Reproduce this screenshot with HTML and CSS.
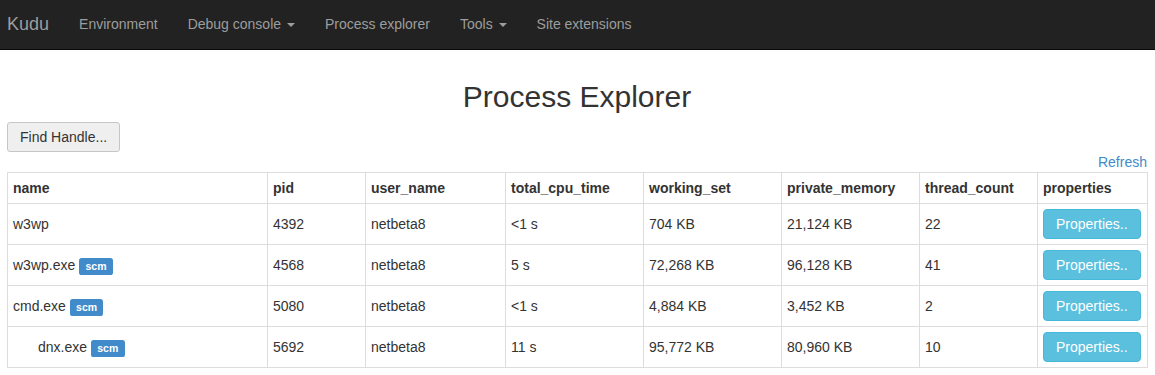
FILE: index.html
```html
<!DOCTYPE html>
<html lang="en">
  <head>
    <meta charset="UTF-8" />
    <title>Process Explorer - Kudu</title>
    <link rel="stylesheet" href="styles.css">
  </head>
  <body>
    <nav class="navbar">
      <a class="brand" href="#">Kudu</a>
      <ul class="nav">
        <li><a href="#">Environment</a></li>
        <li><a href="#">Debug console <b class="caret"></b></a></li>
        <li><a href="#">Process explorer</a></li>
        <li><a href="#">Tools <b class="caret"></b></a></li>
        <li><a href="#">Site extensions</a></li>
      </ul>
    </nav>

    <div class="page">
      <h2 class="title">Process Explorer</h2>
      <div class="toolbar">
        <button class="btn btn-default">Find Handle...</button>
      </div>
      <div class="refresh"><a href="#">Refresh</a></div>

      <table class="processes">
        <colgroup>
          <col class="c-name" />
          <col class="c-pid" />
          <col class="c-user" />
          <col class="c-num" />
          <col class="c-num" />
          <col class="c-num" />
          <col class="c-threads" />
          <col class="c-props" />
        </colgroup>
        <thead>
          <tr>
            <th>name</th>
            <th>pid</th>
            <th>user_name</th>
            <th>total_cpu_time</th>
            <th>working_set</th>
            <th>private_memory</th>
            <th>thread_count</th>
            <th>properties</th>
          </tr>
        </thead>
        <tbody>
          <tr>
            <td>w3wp</td>
            <td>4392</td>
            <td>netbeta8</td>
            <td>&lt;1 s</td>
            <td>704 KB</td>
            <td>21,124 KB</td>
            <td>22</td>
            <td class="props"><button class="btn btn-info">Properties..</button></td>
          </tr>
          <tr>
            <td>w3wp.exe <span class="label">scm</span></td>
            <td>4568</td>
            <td>netbeta8</td>
            <td>5 s</td>
            <td>72,268 KB</td>
            <td>96,128 KB</td>
            <td>41</td>
            <td class="props"><button class="btn btn-info">Properties..</button></td>
          </tr>
          <tr>
            <td>cmd.exe <span class="label">scm</span></td>
            <td>5080</td>
            <td>netbeta8</td>
            <td>&lt;1 s</td>
            <td>4,884 KB</td>
            <td>3,452 KB</td>
            <td>2</td>
            <td class="props"><button class="btn btn-info">Properties..</button></td>
          </tr>
          <tr>
            <td class="child">dnx.exe <span class="label">scm</span></td>
            <td>5692</td>
            <td>netbeta8</td>
            <td>11 s</td>
            <td>95,772 KB</td>
            <td>80,960 KB</td>
            <td>10</td>
            <td class="props"><button class="btn btn-info">Properties..</button></td>
          </tr>
        </tbody>
      </table>
    </div>
  </body>
</html>
```

FILE: styles.css
```css
body {
  margin: 0;
  font-family: "Liberation Sans", Arial, sans-serif;
  font-size: 14px;
  line-height: 20px;
  color: #333;
  background: #fff;
}

a {
  text-decoration: none;
}

.navbar {
  display: flex;
  align-items: flex-start;
  height: 49px;
  padding-left: 7px;
  background: #222;
  border-bottom: 1px solid #080808;
}

.brand {
  padding: 14px 15px 0 0;
  font-size: 18px;
  line-height: 20px;
  color: #9d9d9d;
}

.nav {
  display: flex;
  margin: 0;
  padding: 0;
  list-style: none;
}

.nav a {
  display: block;
  padding: 14px 15px 15px;
  color: #9d9d9d;
}

.caret {
  display: inline-block;
  width: 0;
  height: 0;
  margin-left: 2px;
  vertical-align: middle;
  border-top: 4px solid #9d9d9d;
  border-left: 4px solid transparent;
  border-right: 4px solid transparent;
}

.page {
  padding: 0 8px 0 7px;
}

.title {
  margin: 30px 0 9px;
  font-size: 30px;
  line-height: 33px;
  font-weight: normal;
  text-align: center;
  color: #333;
}

.toolbar {
  display: flex;
}

.btn {
  font-family: inherit;
  font-size: 14px;
  line-height: 20px;
  padding: 4px 12px;
  border-radius: 4px;
  cursor: pointer;
}

.btn-default {
  background: #efefef;
  border: 1px solid #c6c6c6;
  border-radius: 3px;
  color: #333;
}

.btn-info {
  display: block;
  background: #5bc0de;
  border: 1px solid #46b8da;
  color: #fff;
}

.refresh {
  text-align: right;
}

.refresh a {
  color: #428bca;
}

.processes {
  width: 100%;
  table-layout: fixed;
  border-collapse: collapse;
  border: 1px solid #ddd;
}

.c-name { width: 260px; }
.c-pid { width: 98px; }
.c-user { width: 140px; }
.c-num { width: 138px; }
.c-threads { width: 118px; }
.c-props { width: 110px; }

.processes th,
.processes td {
  padding: 5px;
  border: 1px solid #ddd;
  text-align: left;
  vertical-align: middle;
  white-space: nowrap;
}

.processes th {
  font-weight: bold;
}

.processes td.child {
  padding-left: 30px;
}

.label {
  display: inline;
  padding: 0.2em 0.6em 0.3em;
  font-size: 10.5px;
  font-weight: bold;
  line-height: 1;
  color: #fff;
  background: #428bca;
  border-radius: 0.25em;
}
```
